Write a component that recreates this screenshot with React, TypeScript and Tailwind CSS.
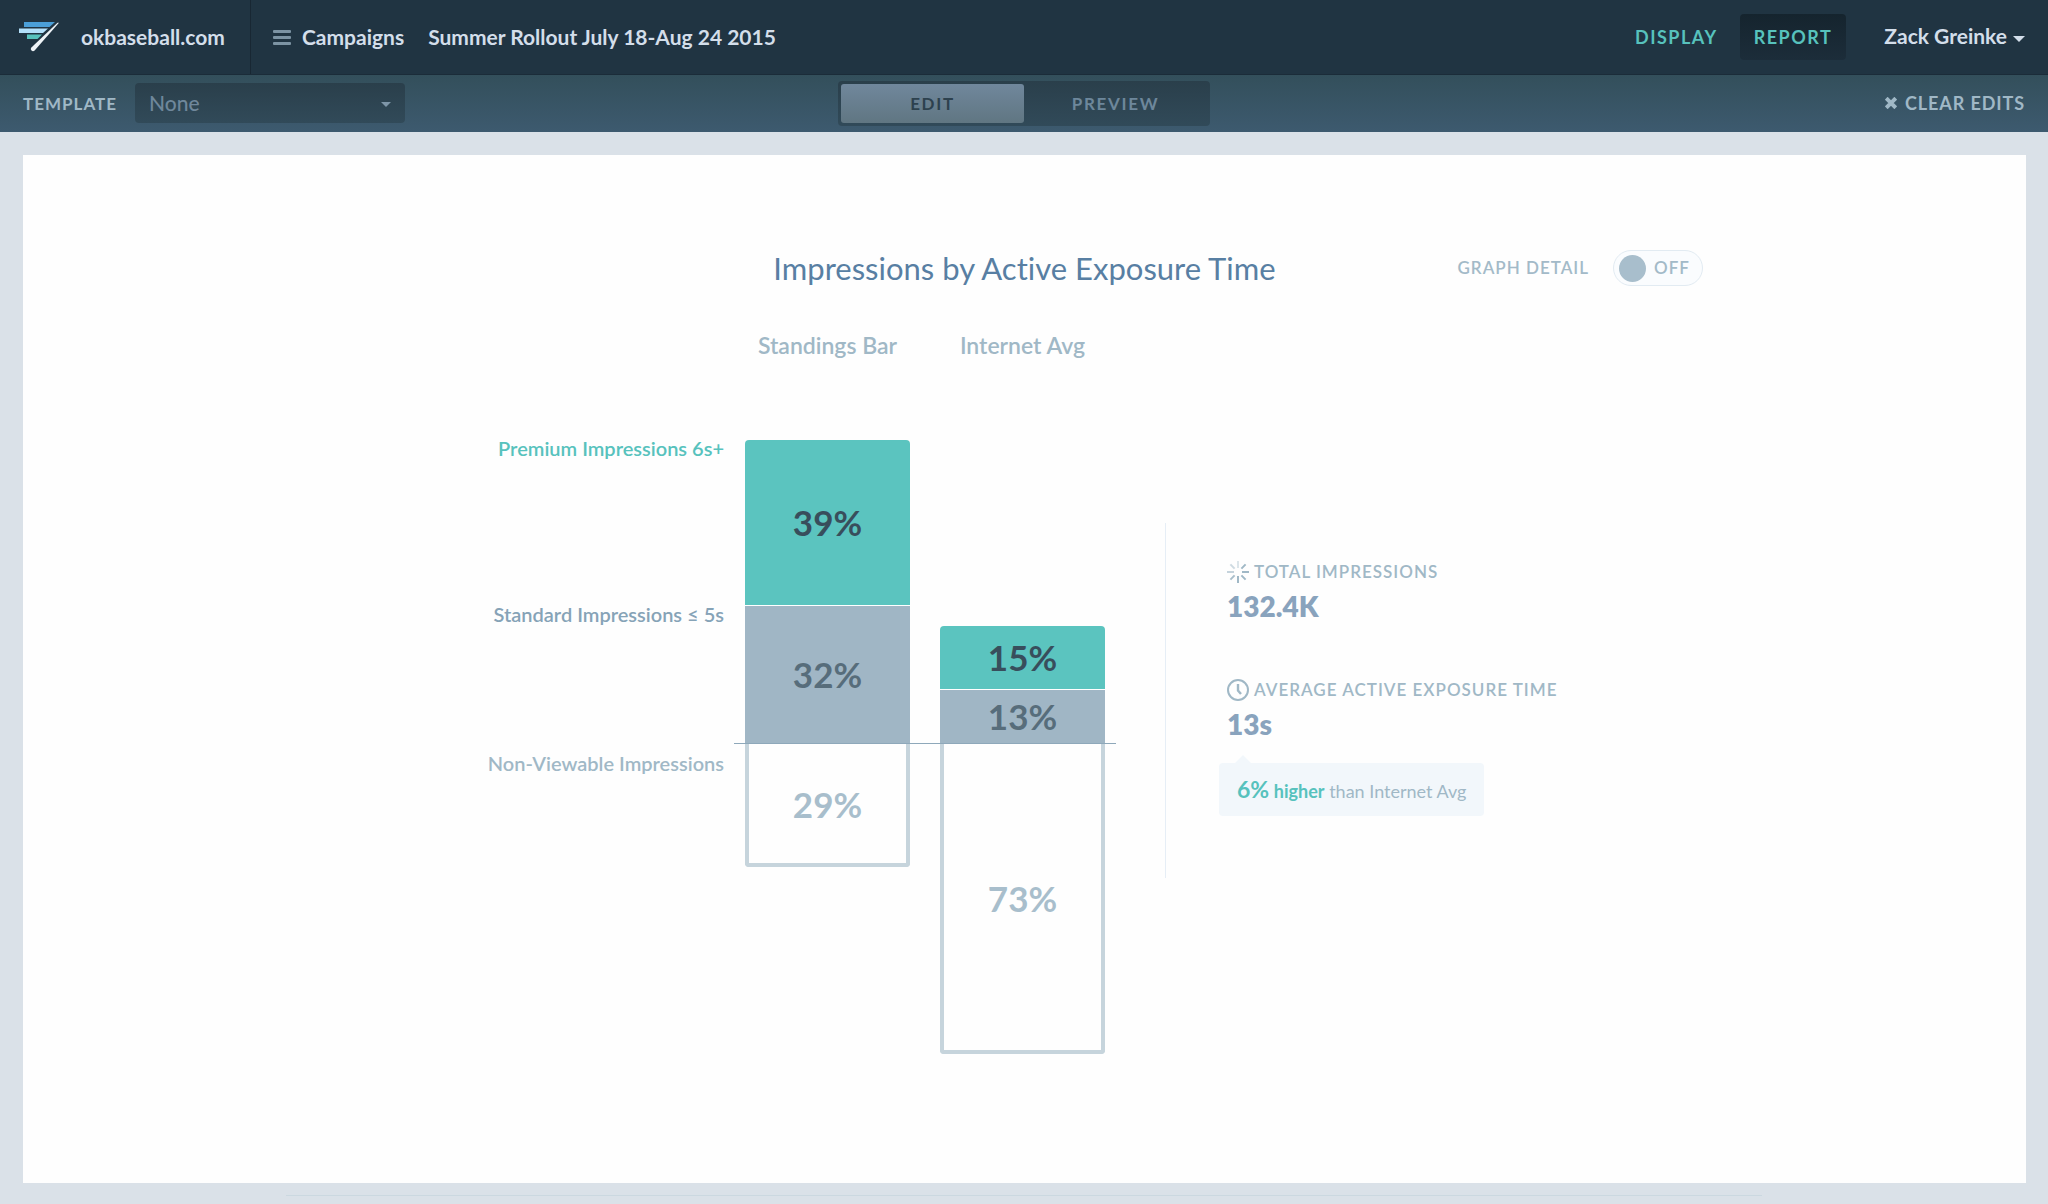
import { useState } from "react";

type Segment = {
  value: string;
  height: number;
};

type Bar = {
  name: string;
  premium: Segment;
  standard: Segment;
  hidden: Segment;
};

const bars: Bar[] = [
  {
    name: "Standings Bar",
    premium: { value: "39%", height: 166 },
    standard: { value: "32%", height: 137 },
    hidden: { value: "29%", height: 123 },
  },
  {
    name: "Internet Avg",
    premium: { value: "15%", height: 64 },
    standard: { value: "13%", height: 53 },
    hidden: { value: "73%", height: 310 },
  },
];

function Logo() {
  return (
    <svg className="h-[30px] w-10 shrink-0" viewBox="0 0 40 30" aria-hidden="true">
      <path d="M5 0h31l-5.500 5H5z" fill="#4b9fd8" />
      <path d="M0 6.500h29L24 11H0z" fill="#b3e0fa" />
      <path d="M8 12.500h15L18.500 17H8z" fill="#57c2bd" />
      <path d="M40 .8 15.600 28.400a2 2 0 0 1-3.200-3L38.500.8z" fill="#eef3f7" />
    </svg>
  );
}

function MenuIcon() {
  return (
    <svg className="h-[15px] w-[18px]" viewBox="0 0 18 15" fill="#7c93a3" aria-hidden="true">
      <rect width="18" height="3" rx="1" />
      <rect y="6" width="18" height="3" rx="1" />
      <rect y="12" width="18" height="3" rx="1" />
    </svg>
  );
}

function Caret({ className }: { className: string }) {
  return (
    <svg className={className} viewBox="0 0 12 6" fill="currentColor" aria-hidden="true">
      <path d="M0 0h12L6 6z" />
    </svg>
  );
}

function CrossIcon() {
  return (
    <svg className="size-3" viewBox="0 0 12 12" stroke="currentColor" strokeWidth="4" aria-hidden="true">
      <path d="m1.200 1.200 9.600 9.600M10.800 1.200 1.200 10.800" />
    </svg>
  );
}

function BurstIcon() {
  return (
    <svg className="size-[22px]" viewBox="0 0 22 22" stroke="#a0b8c6" strokeWidth="2" aria-hidden="true">
      <path d="M11 0v7" opacity=".35" />
      <path d="m3.400 3.400 4.200 4.200" opacity=".5" />
      <path d="M0 11h7" opacity=".6" />
      <path d="m3.400 18.600 4.200-4.200" opacity=".9" />
      <path d="M11 15v7M14.400 14.400l4.200 4.200M15 11h7M14.400 7.600l4.200-4.200" />
    </svg>
  );
}

function ClockIcon() {
  return (
    <svg className="size-[22px]" viewBox="0 0 22 22" fill="none" stroke="#a0b8c6" strokeWidth="2" aria-hidden="true">
      <circle cx="11" cy="11" r="10" />
      <path d="M11 5v6.500l3 3.500" strokeWidth="2.400" />
    </svg>
  );
}

function TopBar() {
  return (
    <header className="flex h-[75px] items-stretch border-b border-[#1b2c39] bg-[#203442] text-[21px] font-bold text-[#d3deea]">
      <a href="#home" className="flex items-center gap-[22px] border-r border-[#182733] pr-[25px] pl-[19px]">
        <Logo />
        <span>okbaseball.com</span>
      </a>
      <nav className="flex items-center gap-6 pl-[22px]">
        <button type="button" className="flex items-center gap-[11px]">
          <MenuIcon />
          Campaigns
        </button>
        <a href="#campaign">Summer Rollout July 18-Aug 24 2015</a>
      </nav>
      <div className="ml-auto flex items-center pr-[23px]">
        <a href="#display" className="px-[22px] text-lg tracking-[1.5px] text-[#57c2bd]">
          DISPLAY
        </a>
        <a
          href="#report"
          aria-current="page"
          className="flex h-[46px] items-center rounded bg-linear-to-b from-[#15242e] to-[#1c2d3a] px-[14px] text-lg tracking-[1.5px] text-[#57c2bd]"
        >
          REPORT
        </a>
        <button type="button" className="flex items-center gap-1.5 pb-0.5 pl-[38px]">
          Zack Greinke
          <Caret className="mt-1.5 h-1.5 w-3" />
        </button>
      </div>
    </header>
  );
}

function ToolBar() {
  const [mode, setMode] = useState("edit");
  const tab = "w-1/2 rounded-[3px] text-[17px] font-bold tracking-widest";
  const active = " bg-linear-to-b from-[#70879c] to-[#607682] text-[#2d414e]";
  const idle = " text-[#6d879b]";
  return (
    <div className="grid h-[57px] grid-cols-[1fr_auto_1fr] items-center bg-linear-to-b from-[#334f5b] to-[#3d5a6f] px-[23px]">
      <div className="flex items-center gap-[18px]">
        <label htmlFor="template" className="text-[17px] font-bold tracking-[1px] text-[#a0b8c6]">
          TEMPLATE
        </label>
        <div className="relative -mt-0.5">
          <select
            id="template"
            className="h-10 w-[270px] appearance-none rounded bg-linear-to-b from-[#2a3f4b] to-[#314a59] px-[14px] text-[21px] font-medium text-[#6f879b]"
          >
            <option>None</option>
          </select>
          <Caret className="pointer-events-none absolute top-[19px] right-3.5 h-[5px] w-2.5 text-[#7e96a8]" />
        </div>
      </div>
      <div className="flex h-[45px] w-[372px] rounded bg-linear-to-b from-[#2a3f4b] to-[#314a59] p-[3px]">
        <button
          type="button"
          aria-pressed={mode === "edit"}
          onClick={() => setMode("edit")}
          className={tab + (mode === "edit" ? active : idle)}
        >
          EDIT
        </button>
        <button
          type="button"
          aria-pressed={mode === "preview"}
          onClick={() => setMode("preview")}
          className={tab + (mode === "preview" ? active : idle)}
        >
          PREVIEW
        </button>
      </div>
      <button
        type="button"
        className="flex items-center gap-2 justify-self-end pb-0.5 text-lg font-bold tracking-wider text-[#a0b8c6]"
      >
        <CrossIcon />
        CLEAR EDITS
      </button>
    </div>
  );
}

function DetailToggle() {
  const [on, setOn] = useState(false);
  return (
    <label className="flex items-center gap-6 justify-self-end text-[17px] font-semibold tracking-[1px] text-[#a3bac8]">
      GRAPH DETAIL
      <input type="checkbox" role="switch" className="sr-only" checked={on} onChange={() => setOn(!on)} />
      <span className="flex h-9 w-[90px] items-center gap-2 rounded-full border border-[#e2ebf2] bg-[#fafcfe] pl-[5px]">
        <span className="size-[27px] rounded-full bg-[#a8becc]" />
        {on ? "ON" : "OFF"}
      </span>
    </label>
  );
}

function Chart() {
  return (
    <div className="w-[382px] shrink-0 text-[35px] font-bold">
      <div className="flex h-[304px] items-end gap-[30px] border-b border-[#8ea8ba] px-[11px]">
        {bars.map((bar) => (
          <div key={bar.name} className="w-[165px]">
            <div
              className="flex items-center justify-center rounded-t border-b border-white bg-[#5bc4bf] text-[#384e5c]"
              style={{ height: bar.premium.height }}
            >
              {bar.premium.value}
            </div>
            <div
              className="flex items-center justify-center bg-[#a0b6c5] text-[#576d7b]"
              style={{ height: bar.standard.height }}
            >
              {bar.standard.value}
            </div>
          </div>
        ))}
      </div>
      <div className="flex items-start gap-[30px] px-[11px]">
        {bars.map((bar) => (
          <div
            key={bar.name}
            className="flex w-[165px] items-center justify-center rounded-b border-4 border-t-0 border-[#c6d4dc] pt-0.5 text-[#a8becc]"
            style={{ height: bar.hidden.height }}
          >
            {bar.hidden.value}
          </div>
        ))}
      </div>
    </div>
  );
}

function Stats() {
  return (
    <section className="mt-[83px] ml-[49px] h-[355px] border-l border-[#e6eef6] pt-[35px] pl-[61px] font-semibold">
      <h2 className="flex items-center gap-[5px] text-[17px] leading-7 tracking-[1px] text-[#a0b8c6]">
        <BurstIcon />
        TOTAL IMPRESSIONS
      </h2>
      <p className="text-[28px] leading-10 font-extrabold text-[#89a3bd]">132.4K</p>
      <h2 className="mt-[50px] flex items-center gap-[5px] text-[17px] leading-7 tracking-[1px] text-[#a0b8c6]">
        <ClockIcon />
        AVERAGE ACTIVE EXPOSURE TIME
      </h2>
      <p className="text-[28px] leading-10 font-extrabold text-[#89a3bd]">13s</p>
      <div className="relative mt-[19px] -ml-2 flex h-[53px] w-fit items-center rounded bg-[#f2f7fb] px-[18px] text-lg font-normal text-[#a0b8c6]">
        <svg className="absolute -top-2 left-4 h-2 w-4" viewBox="0 0 16 8" aria-hidden="true">
          <path d="M0 8 8 0l8 8z" fill="#f2f7fb" />
        </svg>
        <p>
          <strong className="text-[23px] font-bold text-[#57c2bd]">6%</strong>{" "}
          <strong className="font-bold text-[#57c2bd]">higher</strong> than Internet Avg
        </p>
      </div>
    </section>
  );
}

export default function App() {
  return (
    <div className="flex min-h-screen flex-col bg-[#dae1e8] font-['Lato',sans-serif] [font-variant-ligatures:none]">
      <TopBar />
      <ToolBar />
      <main className="mt-[23px] mr-[22px] ml-[23px] flex-1 bg-[#fefefe] pt-[88px] pb-[128px]">
        <div className="mx-auto max-w-[1357px]">
          <div className="grid grid-cols-[1fr_auto_1fr] items-center">
            <h1 className="col-start-2 text-[31px] leading-[50px] text-[#587fa3]">
              Impressions by Active Exposure Time
            </h1>
            <DetailToggle />
          </div>
          <div className="mt-9 flex gap-[30px] pl-[399px] text-[23px] leading-8 font-semibold text-[#a0b8c6]">
            {bars.map((bar) => (
              <h2 key={bar.name} className="w-[165px] text-center">
                {bar.name}
              </h2>
            ))}
          </div>
          <div className="mt-[79px] flex items-start">
            <ul className="mr-2.5 w-[378px] shrink-0 text-right text-[20px] leading-4 font-semibold">
              <li className="h-[166px] text-[#57c2bd]">Premium Impressions 6s+</li>
              <li className="h-[149px] text-[#86a3b7]">Standard Impressions ≤ 5s</li>
              <li className="text-[#a0b8c6]">Non-Viewable Impressions</li>
            </ul>
            <Chart />
            <Stats />
          </div>
        </div>
      </main>
      <footer className="mx-[286px] mt-3 mb-2 border-t border-[#cbd8e0]" />
    </div>
  );
}
